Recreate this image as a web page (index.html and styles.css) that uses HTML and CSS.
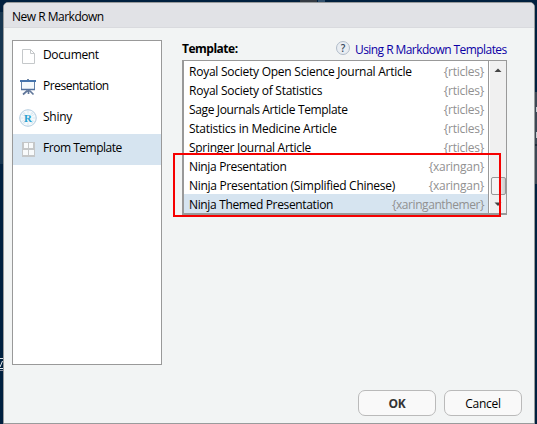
FILE: index.html
```html
<!DOCTYPE html>
<html lang="en">
<head>
<meta charset="utf-8">
<title>New R Markdown</title>
<link rel="stylesheet" href="styles.css">
</head>
<body>
<span class="edge tab"></span><span class="edge tab2"></span>
<span class="edge left-panel"></span><span class="edge left-line"></span><svg class="edge z" width="3" height="10" viewBox="0 0 3 10"><path d="M2.500 1L0 7M0 8.500h3" fill="none" stroke="#e8edf1"/></svg><span class="edge left-rule"></span>
<span class="edge right-panel"></span><span class="edge right-panel2"></span>
<span class="edge bit"></span><span class="edge bit2"></span>
<main class="dialog">
  <header class="title"><span>New R Markdown</span></header>
  <div class="content">
    <nav class="kinds">
      <div class="kind"><svg width="20" height="20" viewBox="0 0 20 20"><path d="M4.500 2.500h8l4 4v10h-12z" fill="#fff" stroke="#c5c8ca"/><path d="M12.500 2.500v4h4" fill="none" stroke="#c5c8ca"/></svg><span class="k1">Document</span></div>
      <div class="kind"><svg width="20" height="20" viewBox="0 0 20 20"><path d="M3.500 4v7.500h13V4" fill="#f4f9fc" stroke="#6482a9"/><path d="M2 2h16v2H2z" fill="#4675ad"/><path d="M9 1h2v1H9z" fill="#6f86a5"/><path d="M3 11.500h14" stroke="#52719d" stroke-width="1.500"/><path d="M10.500 12v4M9.500 12.500l-4.500 4M11.500 12.500l4 4" stroke="#61779a" stroke-width="1.700"/></svg><span class="k2">Presentation</span></div>
      <div class="kind"><svg class="shiny-icon" width="20" height="20" viewBox="0 0 20 20"><circle cx="10" cy="10" r="8.300" fill="#f6fafc" stroke="#b4cde0"/><path d="M4 4l12 12M16 4L4 16M10 2v16M2 10h16M5 3l10 14M3 6l14 8M15 3L5 17M17 6L3 14" stroke="#cddfeb" stroke-width=".7"/><circle cx="10" cy="10" r="5" fill="#f6fafc" opacity=".6"/><text x="10" y="14" class="shiny-r">R</text></svg><span class="k3">Shiny</span></div>
      <div class="kind selected"><svg width="20" height="20" viewBox="0 0 20 20"><path d="M4 2h13v15H4z" fill="#c5c7c8"/><path d="M6 3h4v5H6zM11 3h4v5h-4zM5 10h5v5H5zM11 10h5v5h-5z" fill="#f8fafb"/></svg><span class="k4">From Template</span></div>
    </nav>
    <section class="picker">
      <div class="caption"><strong>Template:</strong><span class="help">?</span><a class="link">Using R Markdown Templates</a></div>
      <div class="listbox">
        <div class="rows">
          <div class="row"><span class="t1">Royal Society Open Science Journal Article</span><em>{rticles}</em></div>
          <div class="row"><span class="t2">Royal Society of Statistics</span><em>{rticles}</em></div>
          <div class="row"><span class="t3">Sage Journals Article Template</span><em>{rticles}</em></div>
          <div class="row"><span class="t4">Statistics in Medicine Article</span><em>{rticles}</em></div>
          <div class="row"><span class="t5">Springer Journal Article</span><em>{rticles}</em></div>
          <div class="row"><span class="t6">Ninja Presentation</span><em>{xaringan}</em></div>
          <div class="row"><span class="t7">Ninja Presentation (Simplified Chinese)</span><em>{xaringan}</em></div>
          <div class="row selected"><span class="t8">Ninja Themed Presentation</span><em class="t8e">{xaringanthemer}</em></div>
        </div>
        <div class="scrollbar"><svg width="8" height="5" viewBox="0 0 8 5"><path d="M.5 4L4 .5 7.500 4z" fill="#444"/></svg><span class="thumb"></span><svg width="8" height="5" viewBox="0 0 8 5"><path d="M.5 .5h7L4 4z" fill="#444"/></svg></div>
      </div>
      <span class="highlight"></span>
    </section>
  </div>
  <footer class="actions"><button class="ok">OK</button><button class="cancel">Cancel</button></footer>
</main>
</body>
</html>
```

FILE: styles.css
```css
* { box-sizing: border-box; }
body { margin: 0; width: 537px; height: 424px; overflow: hidden; position: relative; background: #00203f; padding: 2px 1px 0 3px; font: 12px/19px "Open Sans", "Noto Sans", sans-serif; letter-spacing: -0.25px; color: #000; }
.edge { position: absolute; }
.tab { left: 300px; top: 0; width: 17px; height: 2px; background: #353b43; }
.tab2 { left: 318px; top: 0; width: 7px; height: 2px; background: #32516d; }
.left-panel { left: 0; top: 12px; width: 3px; height: 152px; background: #173650; }
.left-line { left: 0; top: 358px; width: 3px; height: 1px; background: #d9dde1; }
.z { left: 0; top: 360px; }
.left-rule { left: 0; top: 370px; width: 3px; height: 1px; background: #8d8fa0; }
.right-panel { left: 534px; top: 92px; width: 3px; height: 92px; background: #3d4855; }
.right-panel2 { left: 534px; top: 144px; width: 3px; height: 2px; background: #1c2938; }
.bit, .bit2 { left: 536px; width: 1px; background: #c5cdd2; }
.bit { top: 107px; height: 5px; }
.bit2 { top: 132px; height: 6px; }
.dialog { position: relative; width: 532px; height: 422px; border: 1px solid #999b9c; border-radius: 5px 5px 0 0; background: #f2f4f4; display: flex; flex-direction: column; overflow: hidden; }
.title { height: 25px; padding: 4px 8px 0; background: #e1e2e6; border-bottom: 1px solid #d9dade; letter-spacing: -0.5px; }
.content { display: flex; padding: 12px 0 0 8px; height: 337px; gap: 20px; }
.kinds { width: 150px; height: 325px; background: #fff; border: 1px solid #999; }
.kind { height: 31px; display: flex; align-items: flex-start; gap: 5px; padding: 5px 0 0 5px; }
.kind svg { margin-top: 1px; }
.kind .shiny-icon { margin-top: 0; }
.kind span { margin-top: -1px; }
.k1 { letter-spacing: -0.35px; }
.k2, .k4 { letter-spacing: -0.48px; }
.selected { background: #d6e4f0; }
.shiny-r { font: bold 11px "Liberation Serif", serif; fill: #27a2d1; text-anchor: middle; letter-spacing: 0; }
.picker { position: relative; width: 325px; }
.caption { height: 20px; display: flex; }
.caption strong { flex: none; width: 154px; line-height: 17px; letter-spacing: -0.5px; }
.help { flex: none; width: 14px; height: 14px; margin-top: 1px; border: 1px solid #b1bcc9; border-radius: 50%; background: #e9edf2; color: #35475b; font-size: 10px; font-weight: 600; line-height: 12px; text-align: center; letter-spacing: 0; }
.link { margin-left: 5px; line-height: 19px; color: #0c00a5; white-space: nowrap; letter-spacing: -0.56px; }
.listbox { width: 325px; height: 155px; border: 1px solid #999; border-left-width: 2px; border-bottom-width: 2px; display: flex; background: #fff; }
.rows { width: 305px; border-right: 1px solid #999; }
.row { height: 19px; padding: 0 4px 0 5px; line-height: 21px; display: flex; justify-content: space-between; white-space: nowrap; }
.row em { font-style: normal; color: #919191; }
.t3, .t6, .t8 { letter-spacing: -0.35px; }
.t5, .t7 { letter-spacing: -0.28px; }
.row .t8e { letter-spacing: -0.43px; }
.scrollbar { flex: 1; margin-left: 1px; background: #f0f0f0; display: flex; flex-direction: column; align-items: center; }
.scrollbar svg { margin-top: 7px; }
.thumb { width: 15px; height: 18px; margin-top: 104px; border: 1px solid #979797; border-radius: 2px; background: linear-gradient(90deg, #f5f5f5 45%, #ccc); }
.highlight { position: absolute; left: -9px; top: 113px; width: 328px; height: 64px; border: 2px solid #f60000; }
.actions { display: flex; gap: 8px; margin: 25px 0 0 354px; }
button { width: 78px; height: 26px; padding: 0; border: 1px solid #bababa; border-radius: 7px; background: #f9f9f9; font: inherit; letter-spacing: inherit; color: #000; }
.ok { font-weight: bold; color: #333; }
```
